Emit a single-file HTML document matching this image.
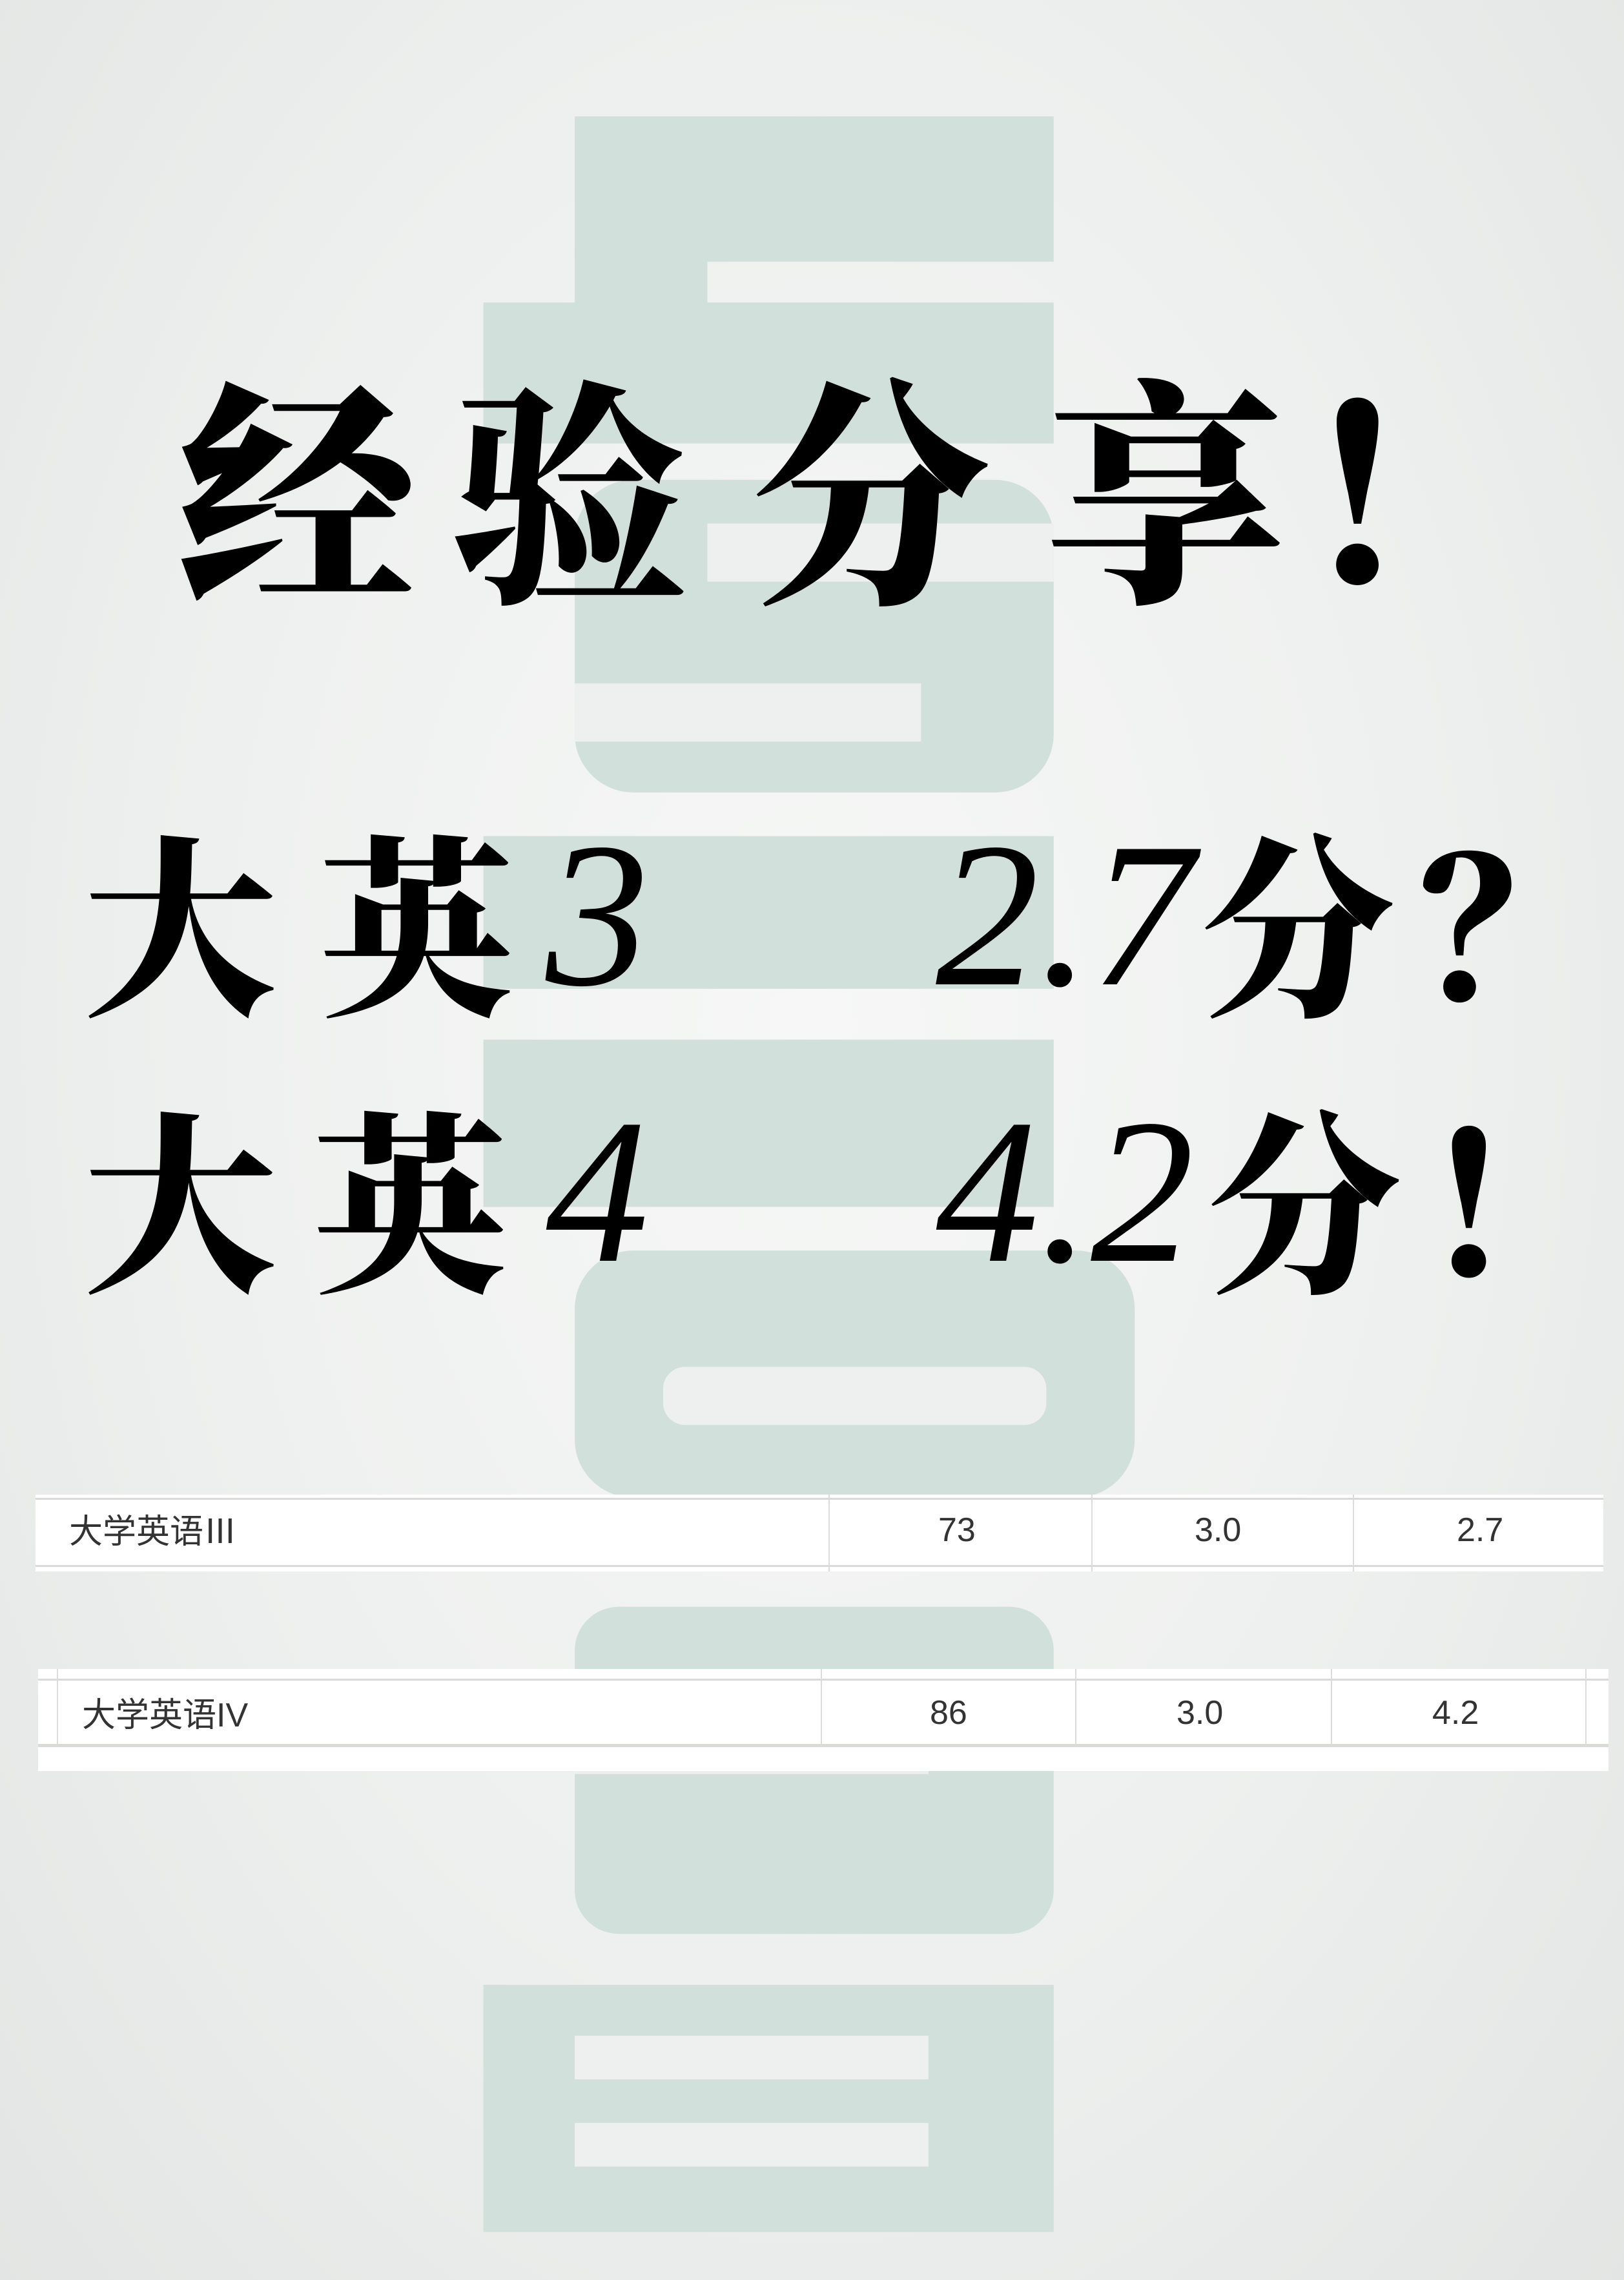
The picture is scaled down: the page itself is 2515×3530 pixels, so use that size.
<!DOCTYPE html>
<html><head><meta charset="utf-8">
<style>
html,body{margin:0;padding:0}
body{width:2515px;height:3530px;position:relative;overflow:hidden;
background:radial-gradient(ellipse at 50% 45%,#f6f7f6 0%,#eef0ef 55%,#e3e5e4 100%);}
.c{position:absolute;line-height:1;white-space:nowrap;color:#000;
font-family:"Noto Serif CJK SC","Noto Sans CJK SC",serif;font-weight:900}
.d{position:absolute;line-height:1;white-space:nowrap;color:#000;
font-family:"Liberation Serif",serif;font-style:italic}
.t{position:absolute;background:#fff}
.tx{position:absolute;font-family:"Liberation Sans","Noto Sans CJK SC",sans-serif;font-size:52px;color:#333;line-height:1}
.v{position:absolute;width:2px;background:#dcdcdc}
.h{position:absolute;background:#d8dad6}
</style></head><body>
<svg width="2515" height="3530" viewBox="0 0 1102 1568" preserveAspectRatio="none" style="position:absolute;left:0;top:0">
<g fill="#d2e0dc">
<rect x="390" y="80" width="325" height="100"/>
<rect x="390" y="170" width="90" height="50"/>
<rect x="328" y="208" width="387" height="97"/>
<rect x="390" y="330" width="325" height="215" rx="40"/>
<rect x="328" y="575" width="387" height="105"/>
<rect x="328" y="715" width="387" height="115"/>
<rect x="390" y="860" width="380" height="170" rx="40"/>
<rect x="390" y="1105" width="325" height="225" rx="30"/>
<rect x="328" y="1365" width="387" height="170"/>
</g>
<g fill="#eef0ef">
<rect x="480" y="360" width="235" height="40"/>
<rect x="390" y="470" width="235" height="40"/>
<rect x="450" y="940" width="260" height="40" rx="15"/>
<rect x="390" y="1160" width="240" height="60"/>
<rect x="390" y="1400" width="240" height="30"/>
<rect x="390" y="1460" width="240" height="30"/>
</g>
</svg>

<span class="c" style="font-size:370px;left:274px;top:558px">经</span>
<span class="c" style="font-size:370px;left:696px;top:558px">验</span>
<span class="c" style="font-size:370px;left:1164px;top:558px">分</span>
<span class="c" style="font-size:370px;left:1620px;top:558px">享</span>
<span class="c" style="font-size:370px;left:2010px;top:558px">！</span>

<span class="c" style="font-size:300px;left:130px;top:1269px">大</span>
<span class="c" style="font-size:300px;left:495px;top:1269px">英</span>
<span class="d" style="font-size:320px;left:845px;top:1257px">3</span>
<span class="d" style="font-size:320px;left:1449px;top:1257px">2.7</span>
<span class="c" style="font-size:300px;left:1860px;top:1269px">分</span>
<span class="c" style="font-size:300px;left:2200px;top:1269px">？</span>

<span class="c" style="font-size:300px;left:130px;top:1697px">大</span>
<span class="c" style="font-size:300px;left:485px;top:1697px">英</span>
<span class="d" style="font-size:320px;left:845px;top:1685px">4</span>
<span class="d" style="font-size:320px;left:1449px;top:1685px">4.2</span>
<span class="c" style="font-size:300px;left:1870px;top:1697px">分</span>
<span class="c" style="font-size:300px;left:2200px;top:1697px">！</span>

<div class="t" style="left:55px;top:2314px;width:2428px;height:119px"></div>
<div class="h" style="left:55px;top:2319px;width:2428px;height:3px"></div>
<div class="h" style="left:55px;top:2423px;width:2428px;height:3px"></div>
<div class="v" style="left:1283px;top:2314px;height:119px"></div>
<div class="v" style="left:1690px;top:2314px;height:119px"></div>
<div class="v" style="left:2095px;top:2314px;height:119px"></div>
<span class="tx" style="left:107px;top:2346px">大学英语Ⅲ</span>
<span class="tx" style="left:1453px;top:2343px">73</span>
<span class="tx" style="left:1850px;top:2343px">3.0</span>
<span class="tx" style="left:2256px;top:2343px">2.7</span>

<div class="t" style="left:59px;top:2584px;width:2432px;height:158px"></div>
<div class="h" style="left:59px;top:2599px;width:2432px;height:3px"></div>
<div class="h" style="left:59px;top:2700px;width:2432px;height:5px"></div>
<div class="v" style="left:88px;top:2584px;height:118px"></div>
<div class="v" style="left:1271px;top:2584px;height:118px"></div>
<div class="v" style="left:1665px;top:2584px;height:118px"></div>
<div class="v" style="left:2061px;top:2584px;height:118px"></div>
<div class="v" style="left:2455px;top:2584px;height:118px"></div>
<span class="tx" style="left:127px;top:2630px">大学英语IV</span>
<span class="tx" style="left:1440px;top:2626px">86</span>
<span class="tx" style="left:1822px;top:2626px">3.0</span>
<span class="tx" style="left:2218px;top:2626px">4.2</span>
</body></html>
